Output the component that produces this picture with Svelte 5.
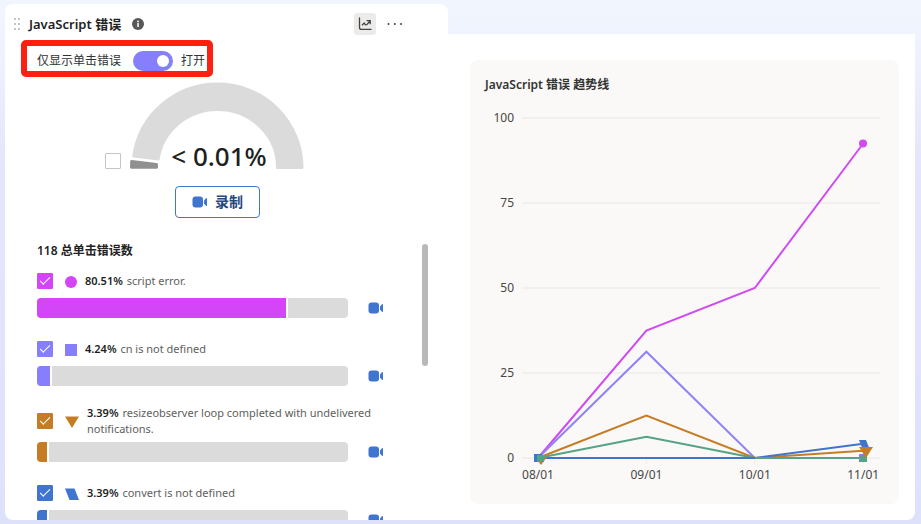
<script>
  let clickOnly = $state(true);
  let gaugeChecked = $state(false);

  let errors = $state([
    { id: 'script', percent: 80.51, message: 'script error.', color: '#d445f8', shape: 'circle', checked: true },
    { id: 'cn', percent: 4.24, message: 'cn is not defined', color: '#867efa', shape: 'square', checked: true },
    {
      id: 'resize',
      percent: 3.39,
      message: 'resizeobserver loop completed with undelivered notifications.',
      color: '#c67c24',
      shape: 'triangle',
      checked: true
    },
    { id: 'convert', percent: 3.39, message: 'convert is not defined', color: '#3f74cf', shape: 'slant', checked: true }
  ]);

  // Trend chart data
  const dates = ['08/01', '09/01', '10/01', '11/01'];
  const ticks = [100, 75, 50, 25, 0];
  const series = [
    { color: '#cf4bf0', values: [0, 37.5, 50, 92.5] },
    { color: '#8f83f5', values: [0, 31.25, 0, 0] },
    { color: '#c67c24', values: [0, 12.5, 0, 2.1] },
    { color: '#55a284', values: [0, 6.25, 0, 0] },
    { color: '#3f74cf', values: [0, 0, 0, 4.2] }
  ];

  const xPos = (i) => 68 + i * 108.4;
  const yPos = (value) => 358 - value * 3.4;
  const toPoints = (values) => values.map((v, i) => `${xPos(i)},${yPos(v)}`).join(' ');
</script>

{#snippet camera()}
  <svg class="camera" viewBox="0 0 16 12" aria-hidden="true">
    <rect x="0.5" y="0.5" width="10.5" height="11" rx="3" fill="#3f74cf" />
    <path d="M12 4.5 14 2.2Q15 1.6 15 2.6V9.4Q15 10.4 14 9.8L12 7.5Z" fill="#3f74cf" />
  </svg>
{/snippet}

<div class="page">
  <section class="card">
    <header>
      <svg class="grip" viewBox="0 0 8 12" aria-hidden="true">
        {#each [1, 5] as x}
          {#each [0, 5, 10] as y}
            <rect {x} {y} width="2" height="2" fill="#c4c4c4" />
          {/each}
        {/each}
      </svg>
      <h2>JavaScript 错误</h2>
      <svg class="info" viewBox="0 0 12 12" aria-hidden="true">
        <circle cx="6" cy="6" r="6" fill="#5a5856" />
        <rect x="5.3" y="5" width="1.5" height="4" fill="#fff" />
        <circle cx="6" cy="3.4" r="0.9" fill="#fff" />
      </svg>
      <button class="trend-button" aria-label="趋势线">
        <svg viewBox="0 0 14 14" aria-hidden="true" fill="none" stroke="#444" stroke-width="1.3">
          <path d="M1.5 1V10.5Q1.5 12.4 3.4 12.4H13" stroke-linecap="round" />
          <path d="M4 8.2 6.2 6 7.4 7.8 8.8 7.6 12 4M8.6 3.6H12.2V7.2" />
        </svg>
      </button>
      <button class="more-button" aria-label="更多">
        <svg viewBox="0 0 16 4" aria-hidden="true" fill="#444">
          <circle cx="1.5" cy="2" r="1" />
          <circle cx="7.8" cy="2" r="1" />
          <circle cx="14" cy="2" r="1" />
        </svg>
      </button>
    </header>

    <div class="filter">
      <label for="click-only">仅显示单击错误</label>
      <input id="click-only" class="toggle" type="checkbox" role="switch" bind:checked={clickOnly} />
      <span>{clickOnly ? '打开' : '关闭'}</span>
    </div>

    <div class="gauge">
      <input class="check" type="checkbox" aria-label="< 0.01%" bind:checked={gaugeChecked} />
      <svg viewBox="0 0 174 86" stroke-linejoin="round" stroke-width="3">
        <path
          d="M3.8 72.9A84.5 83.5 0 0 1 87.5 1A84.5 83.5 0 0 1 172 84.5H147.5A60 58 0 0 0 87.5 26.5A60 58 0 0 0 28.2 76Z"
          fill="#dbdbdb"
          stroke="#dbdbdb"
        />
        <path d="M1.7 78.5 26.5 81.5V84.2H1.5Z" fill="#919191" stroke="#919191" />
        <text x="89" y="83" text-anchor="middle">&lt; 0.01%</text>
      </svg>
    </div>

    <button class="record">
      {@render camera()}
      录制
    </button>

    <div class="list-area">
      <div class="list">
        <h3>118 总单击错误数</h3>
        {#each errors as error (error.id)}
          <div class="error">
            <div class="error-label">
              <input
                id={error.id}
                class="check"
                type="checkbox"
                style:--color={error.color}
                bind:checked={error.checked}
              />
              <svg class="shape {error.shape}" viewBox="0 0 14 12" aria-hidden="true" fill={error.color}>
                {#if error.shape === 'circle'}
                  <circle cx="6" cy="6" r="6" />
                {:else if error.shape === 'square'}
                  <rect width="12" height="12" />
                {:else if error.shape === 'triangle'}
                  <path d="M0 0.5H14L7 12Z" />
                {:else}
                  <path d="M0 0.5H9.5L14 12H4.5Z" />
                {/if}
              </svg>
              <label for={error.id}><b>{error.percent}%</b> {error.message}</label>
            </div>
            <div class="error-bar">
              <div class="bar">
                <div class="fill" style:flex-grow={error.percent} style:background={error.color}></div>
                <div class="rest" style:flex-grow={100 - error.percent}></div>
              </div>
              <button class="play" aria-label="录制">{@render camera()}</button>
            </div>
          </div>
        {/each}
      </div>
      <div class="thumb"></div>
    </div>
  </section>

  <section class="side">
    <div class="trend">
      <h3>JavaScript 错误 趋势线</h3>
      <svg viewBox="0 0 429 390">
        {#each ticks as tick}
          <line x1="52" x2="410" y1={yPos(tick)} y2={yPos(tick)} stroke="#f1f0ef" stroke-width="2" />
          <text x="44" y={yPos(tick) + 4} text-anchor="end">{tick}</text>
        {/each}
        {#each dates as date, i}
          <line x1={xPos(i)} x2={xPos(i)} y1="358" y2="364" stroke="#eeedec" />
          <text x={xPos(i)} y="379" text-anchor="middle">{date}</text>
        {/each}

        {#each series as line}
          <polyline points={toPoints(line.values)} fill="none" stroke={line.color} stroke-width="2" />
        {/each}
        <line x1={xPos(2)} x2={xPos(3)} y1="358" y2="358" stroke="#55a284" stroke-width="2" />

        <!-- Markers at both ends of the lines -->
        <path d="M65 357H77L71 365Z" fill="#c67c24" />
        <rect x="64" y="354" width="8" height="8" fill="#3f74cf" />
        <path d="M67 355H74V362H67Z" fill="#55a284" />

        <circle cx="393" cy="43.5" r="4" fill="#cf4bf0" />
        <path d="M389 340H396L400 350H393Z" fill="#3f74cf" />
        <rect x="389" y="354" width="8" height="8" fill="#867efa" />
        <rect x="390" y="355" width="7" height="7" fill="#55a284" />
        <path d="M389 347H403L396 358Z" fill="#c67c24" />
      </svg>
    </div>
  </section>
</div>

<style>
  :global(body) {
    margin: 0;
  }

  .page {
    box-sizing: border-box;
    height: 100vh;
    padding: 4px 6px 4px 5px;
    display: grid;
    grid-template-columns: 443fr 467fr;
    background: linear-gradient(#f1f6fe, #f0f3fe 8%, #e4e6fb 30%, #dde1fa);
    font-family: 'Noto Sans', 'Noto Sans CJK SC', sans-serif;
    font-size: 12px;
    line-height: 16px;
    color: #222;
  }

  h2,
  h3 {
    margin: 0;
    font-weight: 600;
  }

  h2 {
    font-size: 13px;
    line-height: 20px;
  }

  h3 {
    font-size: 12px;
    line-height: 18px;
  }

  button {
    padding: 0;
    border: none;
    background: none;
    font: inherit;
    cursor: pointer;
  }

  svg {
    display: block;
    overflow: visible;
  }

  .card {
    display: flex;
    flex-direction: column;
    min-height: 0;
    background: #fff;
    border-radius: 8px 8px 0 8px;
  }

  header {
    display: flex;
    align-items: center;
    padding: 9px 45px 5px 8px;
  }

  .grip {
    width: 8px;
    height: 12px;
    margin-right: 8px;
  }

  .info {
    width: 12px;
    height: 12px;
    margin-left: 11px;
  }

  .trend-button {
    display: grid;
    place-items: center;
    width: 22px;
    height: 22px;
    margin-left: auto;
    border-radius: 3px;
    background: #edebe9;
  }

  .trend-button svg {
    width: 14px;
    height: 14px;
  }

  .more-button {
    margin-left: 11px;
  }

  .more-button svg {
    width: 16px;
    height: 4px;
  }

  /* Click error filter */
  .filter {
    display: flex;
    align-items: center;
    align-self: flex-start;
    box-sizing: border-box;
    height: 37px;
    margin-left: 16px;
    padding: 4px 2px 0 10px;
    border: 6px solid #fb2012;
    border-radius: 5px;
    color: #333;
  }

  .toggle {
    appearance: none;
    display: flex;
    align-items: center;
    justify-content: flex-start;
    box-sizing: border-box;
    width: 40px;
    height: 20px;
    margin: 0 8px 0 12px;
    padding: 0 4px;
    border-radius: 10px;
    background: #999;
  }

  .toggle:checked {
    justify-content: flex-end;
    background: #867efa;
  }

  .toggle::after {
    content: '';
    width: 12px;
    height: 12px;
    border-radius: 50%;
    background: #fff;
  }

  .check {
    appearance: none;
    display: grid;
    place-items: center;
    flex: none;
    box-sizing: border-box;
    width: 16px;
    height: 16px;
    margin: 0;
    border: 1px solid #c4c4c4;
    border-radius: 1px;
    background: #fff;
  }

  .check:checked {
    border-color: var(--color, #777);
    background: var(--color, #777);
  }

  .check:checked::after {
    content: '';
    width: 9px;
    height: 4px;
    margin-bottom: 3px;
    border: solid #fff;
    border-width: 0 0 1px 1px;
    transform: rotate(-45deg);
  }

  .gauge {
    display: flex;
    align-items: flex-end;
    gap: 9px;
    margin: 6px 0 0 100px;
  }

  .gauge svg {
    width: 174px;
    height: 86px;
  }

  .gauge text {
    font-size: 26px;
    font-weight: 500;
    fill: #201f1e;
  }

  .record {
    display: flex;
    align-items: center;
    justify-content: center;
    gap: 7px;
    box-sizing: border-box;
    width: 85px;
    height: 32px;
    margin: 17px 0 0 170px;
    border: 1px solid #3f74cf;
    border-radius: 4px;
    font-size: 14px;
    font-weight: 600;
    color: #25477c;
  }

  .camera {
    width: 16px;
    height: 12px;
  }

  /* Error list */
  .list-area {
    display: flex;
    flex: 1;
    min-height: 0;
    margin-top: 24px;
    padding: 0 20px 0 32px;
  }

  .list {
    flex: 1;
    min-width: 0;
    overflow: hidden;
  }

  .thumb {
    width: 6px;
    height: 44%;
    margin: 2px 0 0 38px;
    border-radius: 3px;
    background: #b9b9b9;
  }

  .list h3 {
    margin-bottom: 9px;
  }

  .error {
    margin-bottom: 19px;
  }

  .error-label {
    display: flex;
    align-items: center;
    min-height: 24px;
    margin-bottom: 5px;
  }

  .shape {
    flex: none;
    width: 14px;
    height: 12px;
    margin: 2px 8px 0 12px;
  }

  .circle,
  .square {
    margin-right: 6px;
  }

  .error-label label {
    font-size: 11px;
    color: #605e5c;
  }

  .error-label b {
    margin-right: 1px;
    font-weight: 600;
    color: #201f1e;
  }

  .error-bar {
    display: flex;
    align-items: center;
    gap: 20px;
  }

  .bar {
    display: flex;
    flex: 1;
    gap: 2px;
    height: 20px;
    border-radius: 4px;
    overflow: hidden;
  }

  .fill,
  .rest {
    flex-basis: 0;
  }

  .rest {
    background: #dbdbdb;
  }

  /* Trend chart */
  .side {
    box-sizing: border-box;
    margin-top: 30px;
    padding: 26px 16px 16px 22px;
    background: #fff;
    border-radius: 0 0 8px 0;
  }

  .trend {
    box-sizing: border-box;
    height: 100%;
    padding-top: 16px;
    border-radius: 8px;
    background: #faf9f8;
  }

  .trend h3 {
    padding: 0 15px 6px;
    color: #333;
  }

  .trend svg {
    width: 100%;
  }

  .trend text {
    font-size: 12px;
    fill: #484644;
  }
</style>
